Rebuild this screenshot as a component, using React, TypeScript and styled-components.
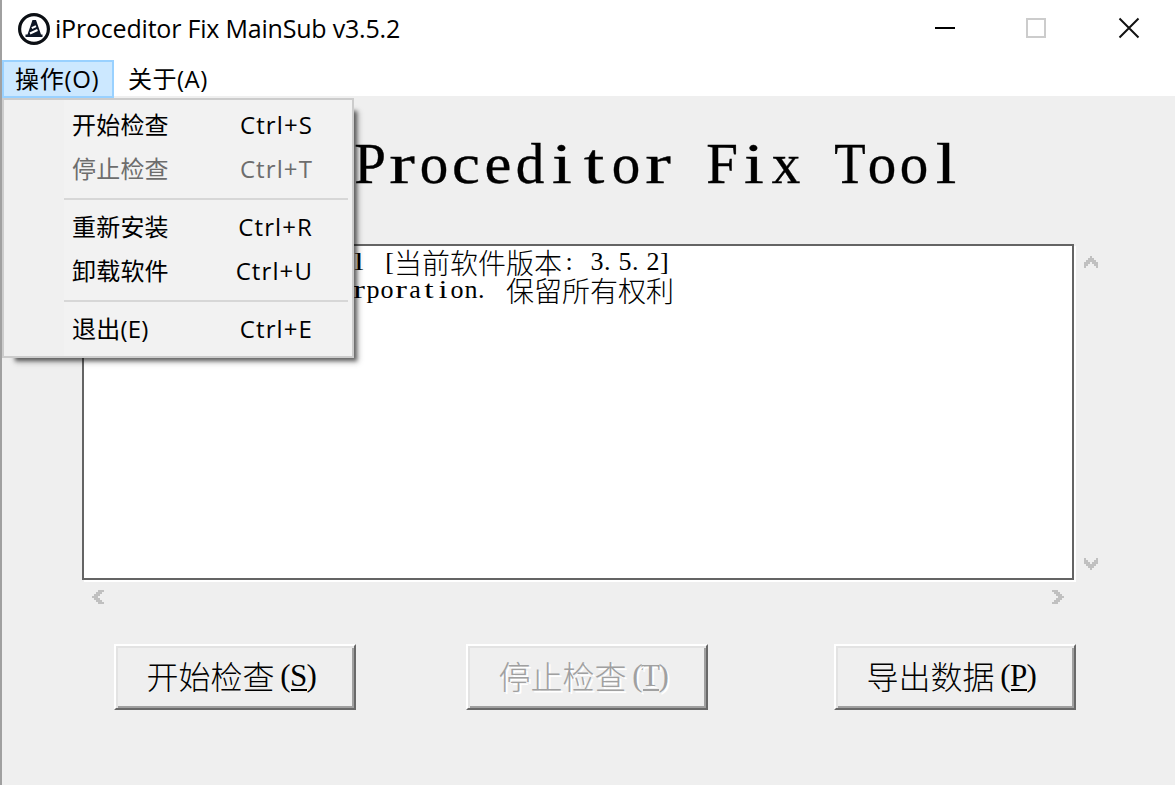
import React from "react";
import styled, { createGlobalStyle, css } from "styled-components";

const Global = createGlobalStyle`
  * { box-sizing: border-box; }
  html, body { margin: 0; padding: 0; }
  body { width: 1175px; height: 785px; overflow: hidden; background: #efefef; }
`;

const uiFont = `"Open Sans", "Noto Sans CJK SC", sans-serif`;
const serifFont = `"Liberation Serif", "Noto Sans CJK SC", serif`;

const Window = styled.div`
  width: 1175px;
  height: 785px;
  border-left: 2px solid #a0a0a0;
  background: #efefef;
  color: #000;
  font-family: ${uiFont};
  display: flex;
  flex-direction: column;
`;

const TitleBar = styled.header`
  height: 60px;
  flex: none;
  background: #fff;
  display: flex;
  align-items: flex-start;
  padding-left: 16px;
`;

const AppIcon = styled.svg`
  width: 32px;
  height: 32px;
  margin-top: 13px;
`;

const Caption = styled.h1`
  margin: 10px 0 0 5px;
  font-size: 25px;
  line-height: 36px;
  font-weight: 400;
  letter-spacing: -0.2px;
  white-space: nowrap;
  flex: 1;
`;

const Controls = styled.div`
  display: flex;
  gap: 68px;
  padding: 16px 33px 0 0;
`;

const ControlIcon = styled.svg`
  width: 24px;
  height: 24px;
`;

const MenuBar = styled.nav`
  height: 36px;
  flex: none;
  background: #fff;
  display: flex;
`;

const MenuSlot = styled.div`
  position: relative;
  z-index: 2;
`;

const MenuTitle = styled.div<{ $open?: boolean }>`
  height: 38px;
  padding: 0 12px;
  border: 2px solid transparent;
  font-size: 24px;
  line-height: 34px;
  letter-spacing: 0.5px;
  white-space: nowrap;
  ${(p) => p.$open && css`
    width: 112px;
    padding: 0 11px;
    border-color: #99d1ff;
    background: #cce8ff;
    letter-spacing: 0.7px;
  `}
`;

const Dropdown = styled.div`
  position: absolute;
  left: 0;
  top: 38px;
  width: 352px;
  height: 260px;
  padding: 4px;
  border: 2px solid #ccc;
  background: linear-gradient(90deg, #f0f0f0 60px, #f2f2f2 60px);
  box-shadow: 8px 8px 4px -5px rgba(0, 0, 0, 0.55), 9px 9px 6px -4px rgba(0, 0, 0, 0.15);
`;

const MenuItem = styled.div<{ $disabled?: boolean }>`
  height: 44px;
  padding: 0 36px 0 64px;
  display: flex;
  justify-content: space-between;
  font-size: 24px;
  line-height: 42px;
  letter-spacing: 0.2px;
  white-space: nowrap;
  color: ${(p) => (p.$disabled ? "#6d6d6d" : "#000")};
`;

const Shortcut = styled.span`
  letter-spacing: 1.1px;
  margin-right: -1px;
`;

const Divider = styled.div`
  height: 2px;
  margin: 6px 0 6px 56px;
  background: #d7d7d7;
`;

const Client = styled.main`
  flex: 1;
  display: flex;
  flex-direction: column;
  font-family: ${serifFont};
`;

const Heading = styled.h2`
  margin: 0;
  height: 148px;
  padding: 33px 0 0 320px;
  font-size: 57px;
  line-height: 70px;
  font-weight: 400;
  white-space: pre;
  -webkit-text-stroke: 0.35px #000;
`;

const Cell = styled.span<{ $w: number; $side?: string; $stretch?: number }>`
  display: inline-flex;
  width: ${(p) => p.$w}px;
  justify-content: ${(p) => p.$side || "center"};
  transform: scaleX(${(p) => p.$stretch || 1});
`;

const LogArea = styled.section`
  display: grid;
  grid-template-columns: 992px 34px;
  grid-template-rows: 336px 34px;
  margin-left: 80px;
`;

const Log = styled.div`
  border: 2px solid #646464;
  box-shadow: 2px 2px 0 #fff;
  background: #fff;
  padding: 2px 2px 2px 268px;
  font-size: 26px;
`;

const LogLine = styled.div`
  display: flex;
  height: 28px;
  line-height: 28px;
  white-space: pre;
`;

const Cjk = styled.span<{ $size: number }>`
  font-family: "Noto Sans CJK SC", sans-serif;
  font-weight: 300;
  font-size: ${(p) => p.$size}px;
`;

const Scroll = styled.div<{ $vertical?: boolean }>`
  display: flex;
  justify-content: space-between;
  flex-direction: ${(p) => (p.$vertical ? "column" : "row")};
  padding: ${(p) => (p.$vertical ? "12px 10px 10px" : "11px 9px")};
`;

const Arrow = styled.svg<{ $turn: number }>`
  width: 14px;
  height: 12px;
  flex: none;
  fill: #c0c0c0;
  transform: rotate(${(p) => p.$turn}deg);
`;

const Buttons = styled.div`
  display: flex;
  margin: 30px 0 0 112px;
`;

const Button = styled.button<{ $gap?: number }>`
  width: 242px;
  height: 66px;
  margin: 0 ${(p) => p.$gap || 0}px 0 0;
  padding: 0 1px 0 0;
  border: 2px solid;
  border-color: #fff #696969 #696969 #fff;
  box-shadow: inset 2px 2px 0 #e3e3e3, inset -2px -2px 0 #a0a0a0;
  background: #efefef;
  color: #000;
  font-family: ${serifFont};
  font-size: 31px;
  line-height: 60px;
  white-space: nowrap;
  display: flex;
  justify-content: center;
  align-items: flex-start;
  &:disabled {
    color: #a0a0a0;
    text-shadow: 2px 2px 0 #fff;
  }
  ${Cjk} {
    line-height: 58px;
  }
`;

const Key = styled.span`
  width: 16px;
  height: 45px;
  display: flex;
  justify-content: center;
  border-bottom: 2px solid currentColor;
`;

const sideOf = (ch: string) =>
  "([".includes(ch) ? "flex-end" : ")].".includes(ch) ? "flex-start" : "center";

/* Letters are widened or narrowed so that they fill a fixed-pitch cell evenly. */
const stretchOf: Record<string, number> = { i: 1.25, l: 1.3, r: 1.35, t: 1.3, c: 1.1, e: 1.06, T: 0.9 };

/* Sets Latin text on a half-width grid and leaves CJK runs at full width. */
function GridText({ text, cell }: { text: string; cell: number }) {
  return (
    <>
      {text.split(/([\u4e00-\u9fff]+)/).map((run, i) =>
        i % 2 ? (
          <Cjk key={i} $size={cell * 2}>{run}</Cjk>
        ) : (
          [...run].map((ch, j) => (
            <Cell key={`${i}-${j}`} $w={cell} $side={sideOf(ch)} $stretch={stretchOf[ch]}>{ch}</Cell>
          ))
        )
      )}
    </>
  );
}

function Chevron({ turn }: { turn: number }) {
  return (
    <Arrow $turn={turn} viewBox="0 0 14 12" shapeRendering="crispEdges">
      <path d="M6 0h2v2h2v2h2v2h2v6h-2v-2h-2v-2h-2v-2h-2v2h-2v2h-2v2h-2v-6h2v-2h2v-2h2z" />
    </Arrow>
  );
}

function PushButton({ label, mark, gap, disabled }: { label: string; mark: string; gap?: number; disabled?: boolean }) {
  return (
    <Button $gap={gap} disabled={disabled}>
      <Cjk $size={32}>{label}</Cjk>
      <Cell $w={16} $side="flex-end">(</Cell>
      <Key>{mark}</Key>
      <Cell $w={16} $side="flex-start">)</Cell>
    </Button>
  );
}

export default function App() {
  return (
    <>
      <Global />
      <Window>
        <TitleBar>
          <AppIcon viewBox="0 0 32 32">
            <circle cx="16" cy="16" r="14.4" fill="#fff" stroke="#0b0f14" strokeWidth="3.2" />
            <path d="M14.500 7h3.500l5 14.500h1.500v2.500h-17v-2.500h2z" fill="#0d1626" />
            <path d="M13.800 15.200l4.200-2M12 20.500l7.500-3.500" stroke="#fff" strokeWidth="2" />
          </AppIcon>
          <Caption>iProceditor Fix MainSub v3.5.2</Caption>
          <Controls>
            <ControlIcon viewBox="0 0 24 24"><path d="M1 12h20" stroke="#000" strokeWidth="2" /></ControlIcon>
            <ControlIcon viewBox="0 0 24 24"><path d="M1 3h18v18H1z" fill="none" stroke="#ccc" strokeWidth="2" /></ControlIcon>
            <ControlIcon viewBox="0 0 24 24"><path d="M1.500 2.500l19 19M20.500 2.500l-19 19" stroke="#111" strokeWidth="2" /></ControlIcon>
          </Controls>
        </TitleBar>
        <MenuBar>
          <MenuSlot>
            <MenuTitle $open>操作(O)</MenuTitle>
            <Dropdown>
              <MenuItem><span>开始检查</span><Shortcut>Ctrl+S</Shortcut></MenuItem>
              <MenuItem $disabled><span>停止检查</span><Shortcut>Ctrl+T</Shortcut></MenuItem>
              <Divider />
              <MenuItem><span>重新安装</span><Shortcut>Ctrl+R</Shortcut></MenuItem>
              <MenuItem><span>卸载软件</span><Shortcut>Ctrl+U</Shortcut></MenuItem>
              <Divider />
              <MenuItem><span>退出(E)</span><Shortcut>Ctrl+E</Shortcut></MenuItem>
            </Dropdown>
          </MenuSlot>
          <MenuTitle>关于(A)</MenuTitle>
        </MenuBar>
        <Client>
          <Heading><GridText text="iProceditor Fix Tool" cell={32} /></Heading>
          <LogArea>
            <Log>
              <LogLine><GridText text="l [当前软件版本: 3.5.2]" cell={14} /></LogLine>
              <LogLine><GridText text="rporation. 保留所有权利" cell={14} /></LogLine>
            </Log>
            <Scroll $vertical>
              <Chevron turn={0} />
              <Chevron turn={180} />
            </Scroll>
            <Scroll>
              <Chevron turn={-90} />
              <Chevron turn={90} />
            </Scroll>
          </LogArea>
          <Buttons>
            <PushButton label="开始检查" mark="S" gap={110} />
            <PushButton label="停止检查" mark="T" gap={126} disabled />
            <PushButton label="导出数据" mark="P" />
          </Buttons>
        </Client>
      </Window>
    </>
  );
}
